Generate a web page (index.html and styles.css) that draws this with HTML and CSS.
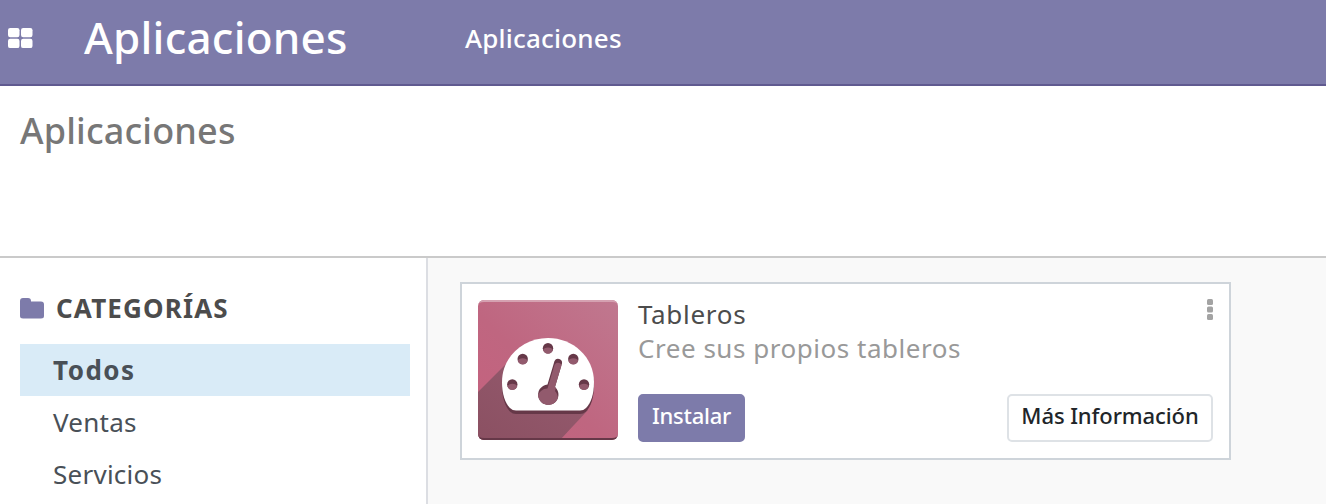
FILE: index.html
```html
<!DOCTYPE html>
<html lang="es">
<head>
<meta charset="utf-8">
<title>Aplicaciones</title>
<link rel="stylesheet" href="styles.css">
</head>
<body>
<header class="navbar">
  <svg class="apps-icon" width="25" height="21" viewBox="0 0 25 21" fill="#fff"><rect width="11.5" height="9.300" rx="2.200"/><rect x="13" width="11.5" height="9.300" rx="2.200"/><rect y="10.800" width="11.5" height="9.300" rx="2.200"/><rect x="13" y="10.800" width="11.5" height="9.300" rx="2.200"/></svg>
  <span class="brand">Aplicaciones</span>
  <a class="menu-link">Aplicaciones</a>
</header>
<section class="control-panel"><h1 class="page-title">Aplicaciones</h1></section>
<main class="content">
  <aside class="sidebar">
    <h2 class="section-title">
      <svg class="folder" width="24" height="21" viewBox="0 0 24 21"><path fill="#7d7baa" d="M3 0H8Q11 0 11 3V3.5H21Q24 3.5 24 6.5V18Q24 20.500 21 20.500H3Q0 20.500 0 18V3Q0 0 3 0Z"/></svg>
      <span class="section-label">CATEGORÍAS</span>
    </h2>
    <ul class="categories">
      <li class="category active"><span class="todos">Todos</span></li>
      <li class="category"><span class="ventas">Ventas</span></li>
      <li class="category"><span class="servicios">Servicios</span></li>
    </ul>
  </aside>
  <div class="kanban">
    <article class="card">
      <svg class="app-icon" width="140" height="140" viewBox="0 0 140 140">
        <defs>
          <linearGradient id="bg" x1="0" y1="1" x2="1" y2="0"><stop offset="0" stop-color="#c6617e"/><stop offset=".45" stop-color="#bf6680"/><stop offset="1" stop-color="#c0788f"/></linearGradient>
          <linearGradient id="shade" x1="0" y1="1" x2="1" y2="0"><stop offset="0" stop-color="#8b5062"/><stop offset="1" stop-color="#965c70"/></linearGradient>
          <clipPath id="tile"><rect width="140" height="140" rx="6"/></clipPath>
          <clipPath id="hub"><path d="M76.500 61A4 4 0 0 1 84 63.500L77 87A10.200 10.200 0 1 1 69.500 84.500Z"/></clipPath>
        </defs>
        <g clip-path="url(#tile)">
          <rect width="140" height="140" fill="url(#bg)"/>
          <path d="M0 92L34 58L110 110L82 140H0Z" fill="url(#shade)"/>
          <path fill="#d5a1b1" d="M0 0H140V6Q140 2 134 2H6Q0 2 0 6Z"/>
          <path fill="#663848" d="M0 140H140V134Q140 138 134 138H6Q0 138 0 134Z"/>
        </g>
        <path transform="translate(0 3.500)" fill="#663848" d="M70 38C95 38 116 57 116 82C116 94 113 103 108 108Q105.500 110.500 102 110.500H38Q34.500 110.500 32 108C27 103 24 94 24 82C24 57 45 38 70 38Z"/>
        <path fill="#fff" d="M70 38C95 38 116 57 116 82C116 94 113 103 108 108Q105.500 110.500 102 110.500H38Q34.500 110.500 32 108C27 103 24 94 24 82C24 57 45 38 70 38Z"/>
        <g fill="#663848"><circle cx="34.300" cy="84.500" r="5.200"/><circle cx="44.700" cy="59" r="5.200"/><circle cx="70" cy="48.200" r="5.200"/><circle cx="95.300" cy="59" r="5.200"/><circle cx="106" cy="84.500" r="5.200"/></g>
        <g fill="#925a6d"><path d="M29.400 86.500a5 3.300 0 0 1 9.800 0a5.200 5.200 0 0 1-9.800 0zM39.800 61a5 3.300 0 0 1 9.800 0a5.200 5.200 0 0 1-9.800 0zM65.100 50.200a5 3.300 0 0 1 9.800 0a5.200 5.200 0 0 1-9.800 0zM90.400 61a5 3.300 0 0 1 9.800 0a5.200 5.200 0 0 1-9.800 0zM101.100 86.500a5 3.300 0 0 1 9.800 0a5.200 5.200 0 0 1-9.800 0z"/></g>
        <path fill="#663848" d="M76.500 61A4 4 0 0 1 84 63.500L77 87A10.200 10.200 0 1 1 69.500 84.500Z"/>
        <path clip-path="url(#hub)" fill="#925a6d" d="M76.500 65A4 4 0 0 1 84 67.500L77 91A10.200 10.200 0 1 1 59.500 97A10.200 10.200 0 0 1 69.500 88.500Z"/>
      </svg>
      <div class="details">
        <div class="card-top">
          <h3 class="app-name">Tableros</h3>
          <svg class="dots" width="6" height="22" viewBox="0 0 6 22" fill="#a3a3a3"><rect width="6" height="6" rx="1.500"/><rect y="7.500" width="6" height="6" rx="1.500"/><rect y="15" width="6" height="6" rx="1.500"/></svg>
        </div>
        <p class="summary">Cree sus propios tableros</p>
        <div class="actions">
          <button class="btn primary">Instalar</button>
          <button class="btn secondary">Más Información</button>
        </div>
      </div>
    </article>
  </div>
</main>
</body>
</html>
```
FILE: styles.css
```css
* { box-sizing: border-box; }
body { margin: 0; height: 504px; overflow: hidden; display: flex; flex-direction: column; background: #fff; color: #4c4c4c; font-family: "Lucida Grande", "Noto Sans", sans-serif; font-size: 26px; white-space: nowrap; }
h1, h2, h3, p, ul { margin: 0; padding: 0; font-weight: 400; list-style: none; }
svg { display: block; flex: none; }
.navbar { display: flex; align-items: flex-start; height: 86px; flex: none; background: #7d7baa; border-bottom: 2px solid #605a90; color: #fff; padding-left: 8px; }
.apps-icon { margin-top: 28px; }
.brand { width: 381px; margin-left: 51px; font-size: 44px; font-weight: 500; line-height: 74px; letter-spacing: .2px; }
.menu-link { line-height: 76px; font-weight: 500; letter-spacing: .2px; }
.control-panel { height: 172px; flex: none; padding: 21px 20px; border-bottom: 2px solid #cacaca; }
.page-title { font-size: 36px; font-weight: 500; line-height: 48px; letter-spacing: .15px; color: #777; }
.content { display: flex; flex: 1; min-height: 0; }
.sidebar { width: 428px; flex: none; border-right: 2px solid #dcdee3; padding: 30px 16px 0 20px; }
.section-title { display: flex; align-items: center; gap: 12px; height: 40px; margin-bottom: 16px; font-size: 26px; font-weight: 700; letter-spacing: 1.15px; }
.category { height: 52px; line-height: 52px; padding-left: 33px; color: #495057; letter-spacing: .25px; }
.active { background: #d9ebf7; font-weight: 700; letter-spacing: 1.5px; }
.kanban { flex: 1; background: #f9f9f9; padding: 24px 95px 0 32px; }
.card { display: flex; gap: 20px; height: 178px; padding: 16px; background: #fff; border: 2px solid #ced4da; }
.details { flex: 1; margin-top: -3px; }
.card-top { display: flex; justify-content: space-between; }
.app-name { font-size: 26px; line-height: 34px; letter-spacing: .7px; }
.dots { margin-top: 2px; }
.summary { line-height: 34px; color: #999; letter-spacing: .53px; }
.actions { display: flex; justify-content: space-between; margin-top: 29px; }
.btn { height: 48px; padding: 0 0 6px; border: 2px solid; border-radius: 5px; font: 500 22px/38px "Lucida Grande", "Noto Sans", sans-serif; letter-spacing: -.1px; }
.primary { width: 107px; background: #7d7baa; border-color: #7d7baa; color: #fff; letter-spacing: -.25px; }
.secondary { width: 206px; background: #fff; border-color: #dee2e6; color: #212529; }
```
